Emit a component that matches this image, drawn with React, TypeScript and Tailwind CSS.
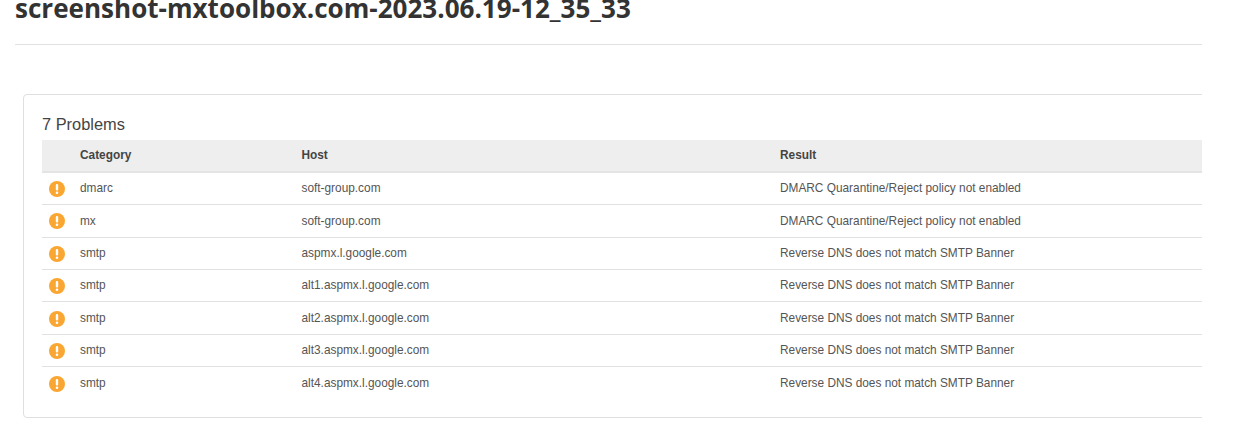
const rows = [
  { category: 'dmarc', host: 'soft-group.com', result: 'DMARC Quarantine/Reject policy not enabled' },
  { category: 'mx', host: 'soft-group.com', result: 'DMARC Quarantine/Reject policy not enabled' },
  { category: 'smtp', host: 'aspmx.l.google.com', result: 'Reverse DNS does not match SMTP Banner' },
  { category: 'smtp', host: 'alt1.aspmx.l.google.com', result: 'Reverse DNS does not match SMTP Banner' },
  { category: 'smtp', host: 'alt2.aspmx.l.google.com', result: 'Reverse DNS does not match SMTP Banner' },
  { category: 'smtp', host: 'alt3.aspmx.l.google.com', result: 'Reverse DNS does not match SMTP Banner' },
  { category: 'smtp', host: 'alt4.aspmx.l.google.com', result: 'Reverse DNS does not match SMTP Banner' },
];

function WarningIcon() {
  return (
    <svg width="16" height="16" viewBox="0 0 16 16" className="block">
      <circle cx="8" cy="8" r="8" fill="#faa632" />
      <rect x="6.8" y="3" width="2.4" height="6.6" rx="1" fill="#fff" />
      <circle cx="8" cy="11.8" r="1.3" fill="#fff" />
    </svg>
  );
}

export default function App() {
  return (
    <div className="h-[433px] w-[1257px] overflow-hidden bg-white font-['Liberation_Sans',sans-serif] text-[#555]">
      <div className="ml-[15px] w-[1187px] overflow-hidden">
        <h1 className="mt-[-8px] h-[53px] border-b border-[#e1e1e1] font-['Open_Sans',sans-serif] text-[26.05px] font-bold leading-[33px] whitespace-nowrap text-[#333]">screenshot-mxtoolbox.com-2023.06.19-12_35_33</h1>

        <div className="mt-[49px] ml-2 h-[324px] w-[1300px] rounded-[4px] border border-[#dfdfdf] pt-[20px] pl-[18px]">
          <h2 className="h-[25px] text-[16.4px] leading-[18px] text-[#444]">7 Problems</h2>
          <table className="w-[1160px] table-fixed border-collapse text-[11.85px]">
            <thead>
              <tr className="h-[32.4px] border-b-2 border-[#e4e4e4] bg-[#eeeeee] text-left text-[#444]">
                <th className="w-[38px]" />
                <th className="w-[221.5px] font-bold">Category</th>
                <th className="w-[478.5px] font-bold">Host</th>
                <th className="font-bold">Result</th>
              </tr>
            </thead>
            <tbody>
              {rows.map((row, i) => (
                <tr key={i} className="h-[32.4px] border-b border-[#e1e1e1] last:border-b-0">
                  <td className="pt-px pl-[7px]"><WarningIcon /></td>
                  <td className="pt-px">{row.category}</td>
                  <td className="pt-px">{row.host}</td>
                  <td className="pt-px">{row.result}</td>
                </tr>
              ))}
            </tbody>
          </table>
        </div>
      </div>
    </div>
  );
}
